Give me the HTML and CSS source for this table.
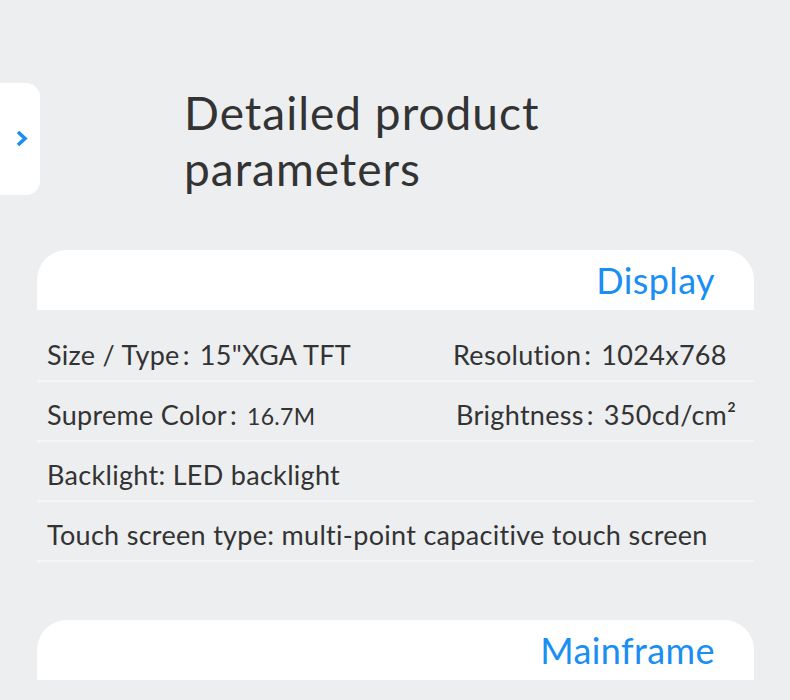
FILE: index.html
```html
<!DOCTYPE html>
<html>
<head>
<meta charset="utf-8">
<link rel="stylesheet" href="styles.css">
</head>
<body>
<div class="page">
  <div class="hero">
    <div class="tab">
      <svg class="chev" width="13" height="17" viewBox="0 0 13 17"><polyline points="3,2 10,8.5 3,15" fill="none" stroke="#1a8ef2" stroke-width="3.6" stroke-linejoin="miter"/></svg>
    </div>
    <h1 class="title">Detailed product<br>parameters</h1>
  </div>
  <section class="card">
    <div class="card-head"><span>Display</span></div>
    <div class="rows">
      <div class="row two"><div class="cell">Size / Type<span class="c">:</span>15"XGA TFT</div><div class="cell">Resolution<span class="c">:</span>1024x768</div></div>
      <div class="row two"><div class="cell">Supreme Color<span class="c">:</span><span class="sm">16.7M</span></div><div class="cell r2">Brightness<span class="c">:</span>350cd/cm²</div></div>
      <div class="row"><div class="cell">Backlight: LED backlight</div></div>
      <div class="row"><div class="cell">Touch screen type: multi-point capacitive touch screen</div></div>
    </div>
  </section>
  <section class="card card2">
    <div class="card-head"><span>Mainframe</span></div>
  </section>
</div>
</body>
</html>
```
FILE: styles.css
```css
html, body {
  margin: 0;
  padding: 0;
  background: #edeef0;
}
.page {
  width: 790px;
  height: 700px;
  overflow: hidden;
  font-family: "Lato", "Noto Sans", sans-serif;
  color: #333;
}
.hero {
  display: flex;
  align-items: flex-start;
  padding-top: 83px;
  height: 250px;
  box-sizing: border-box;
}
.tab {
  width: 40px;
  height: 112px;
  background: #fff;
  border-radius: 0 14px 14px 0;
  display: flex;
  align-items: center;
  padding-left: 15px;
  box-sizing: border-box;
  flex: none;
}
.chev { display: block; margin-top: -1px; }
.title {
  margin: 2px 0 0 144px;
  font-weight: 400;
  font-size: 46px;
  line-height: 56px;
  letter-spacing: 1px;
  color: #333;
}
.card {
  margin: 0 36px 0 37px;
}
.card-head {
  height: 60px;
  background: #fff;
  border-radius: 30px 30px 0 0;
  display: flex;
  justify-content: flex-end;
  align-items: center;
  padding-right: 39px;
  font-size: 36px;
  color: #1a8ef2;
  letter-spacing: 0.4px;
}
.rows {
  padding-top: 12px;
}
.row {
  height: 60px;
  border-bottom: 2px solid #f6f6f8;
  box-sizing: border-box;
  display: flex;
  align-items: center;
  padding: 6px 0 0 10px;
  font-size: 27px;
  letter-spacing: 0.3px;
  color: #333;
}
.row .cell { flex: none; white-space: nowrap; }
.row.two .cell:first-child { width: 406px; }
.row .r2 { margin-left: 3px; }
.c { margin: 0 10px 0 3px; }
.sm { font-size: 23px; }
.card2 { margin-top: 58px; }
```
